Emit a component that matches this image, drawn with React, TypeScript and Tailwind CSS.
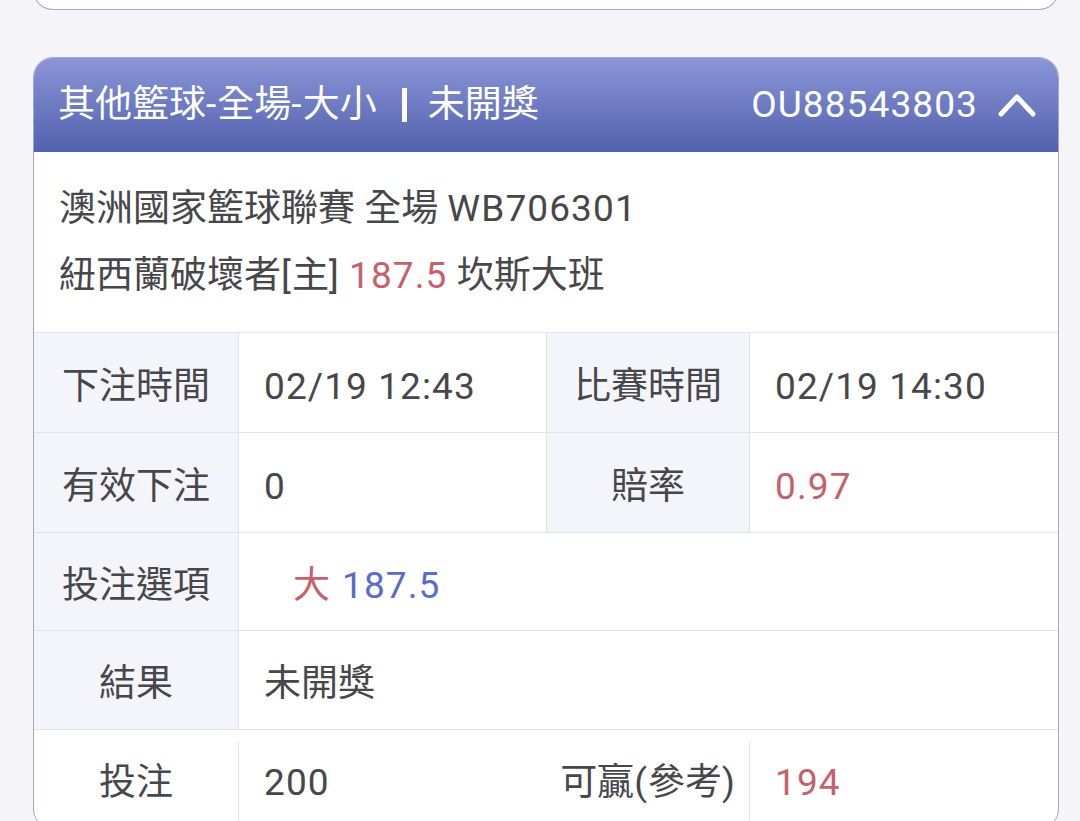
import { ReactNode } from "react";

const font = { fontFamily: "Roboto, 'Noto Sans CJK TC', sans-serif" };

// 拉丁字母與數字略寬一些
function N({ children, className = "" }: { children: ReactNode; className?: string }) {
  return <span className={`tracking-[1.1px] ${className}`}>{children}</span>;
}

function Label({ children, plain }: { children: ReactNode; plain?: boolean }) {
  return (
    <div
      className={`flex items-center justify-center border-r border-[#dfe2f0] pt-[8px] ${
        plain ? "bg-white" : "bg-[#f4f5fb]"
      }`}
    >
      {children}
    </div>
  );
}

function Value({ children, className = "" }: { children: ReactNode; className?: string }) {
  return <div className={`flex items-center pl-[25px] pt-[8px] ${className}`}>{children}</div>;
}

export default function App() {
  return (
    <div className="min-h-screen bg-[#f5f5f7] pl-[33px] pr-[21px] text-[37px] text-[#47474b]" style={font}>
      {/* 上一張卡片的底部 */}
      <div className="mt-[-30px] h-[40px] rounded-b-[20px] border-x border-b border-[#a3a6cf] bg-white" />

      <div className="mt-[47px] overflow-hidden rounded-[20px] border border-[#a3a6cf] bg-white">
        {/* 標題列 */}
        <div className="flex h-[94px] items-center justify-between bg-gradient-to-b from-[#8b96d6] to-[#5261ae] pl-[24px] pr-[22px] text-white">
          <div className="flex items-center">
            <span>
              其他籃球<N>-</N>全場<N>-</N>大小
            </span>
            <span className="ml-[25px] mr-[21px] inline-block h-[34px] w-[5px] bg-white" />
            <span>未開獎</span>
          </div>
          <div className="flex items-center gap-[20px]">
            <N>OU88543803</N>
            <svg width="38" height="26" viewBox="0 0 38 26" fill="none">
              <path d="M3 22 L19 5 L35 22" stroke="white" strokeWidth="5" strokeLinecap="round" strokeLinejoin="round" />
            </svg>
          </div>
        </div>

        {/* 賽事資訊 */}
        <div className="px-[25px] py-[23px] leading-[67px]">
          <div>
            澳洲國家籃球聯賽 全場 <N>WB706301</N>
          </div>
          <div>
            紐西蘭破壞者<N>[</N>主<N>]</N> <N className="text-[#c6606b]">187.5</N> 坎斯大班
          </div>
        </div>

        {/* 明細表 */}
        <div className="grid grid-cols-[205px_308px_203px_1fr] border-t border-[#dfe2f0]">
          <Label>下注時間</Label>
          <Value className="h-[99px] border-r border-[#dfe2f0]">
            <N>02/19 12:43</N>
          </Value>
          <Label>比賽時間</Label>
          <Value>
            <N>02/19 14:30</N>
          </Value>

          <div className="col-span-4 h-px bg-[#dfe2f0]" />
          <Label>有效下注</Label>
          <Value className="h-[99px] border-r border-[#dfe2f0]">
            <N>0</N>
          </Value>
          <Label>賠率</Label>
          <Value className="text-[#c6606b]">
            <N>0.97</N>
          </Value>

          <div className="col-span-4 h-px bg-[#dfe2f0]" />
          <Label>投注選項</Label>
          <Value className="col-span-3 h-[97px] pl-[54px]">
            <span className="text-[#c6606b]">大</span>
            <N className="ml-[12px] text-[#5a6bc9]">187.5</N>
          </Value>

          <div className="col-span-4 h-px bg-[#dfe2f0]" />
          <Label>結果</Label>
          <Value className="col-span-3 h-[98px]">未開獎</Value>

          <div className="col-span-4 h-px bg-[#dfe2f0]" />
          <div className="col-span-4 grid h-[98px] grid-cols-[205px_308px_203px_1fr] pt-[12px]">
            <div className="flex items-center justify-center border-r border-[#dfe2f0] pb-[4px]">投注</div>
            <div className="flex items-center pb-[4px] pl-[25px]">
              <N>200</N>
            </div>
            <div className="flex items-center justify-center border-r border-[#dfe2f0] pb-[4px]">
              可贏<N>(</N>參考<N>)</N>
            </div>
            <div className="flex items-center pb-[4px] pl-[25px] text-[#c6606b]">
              <N>194</N>
            </div>
          </div>
        </div>
      </div>
    </div>
  );
}
